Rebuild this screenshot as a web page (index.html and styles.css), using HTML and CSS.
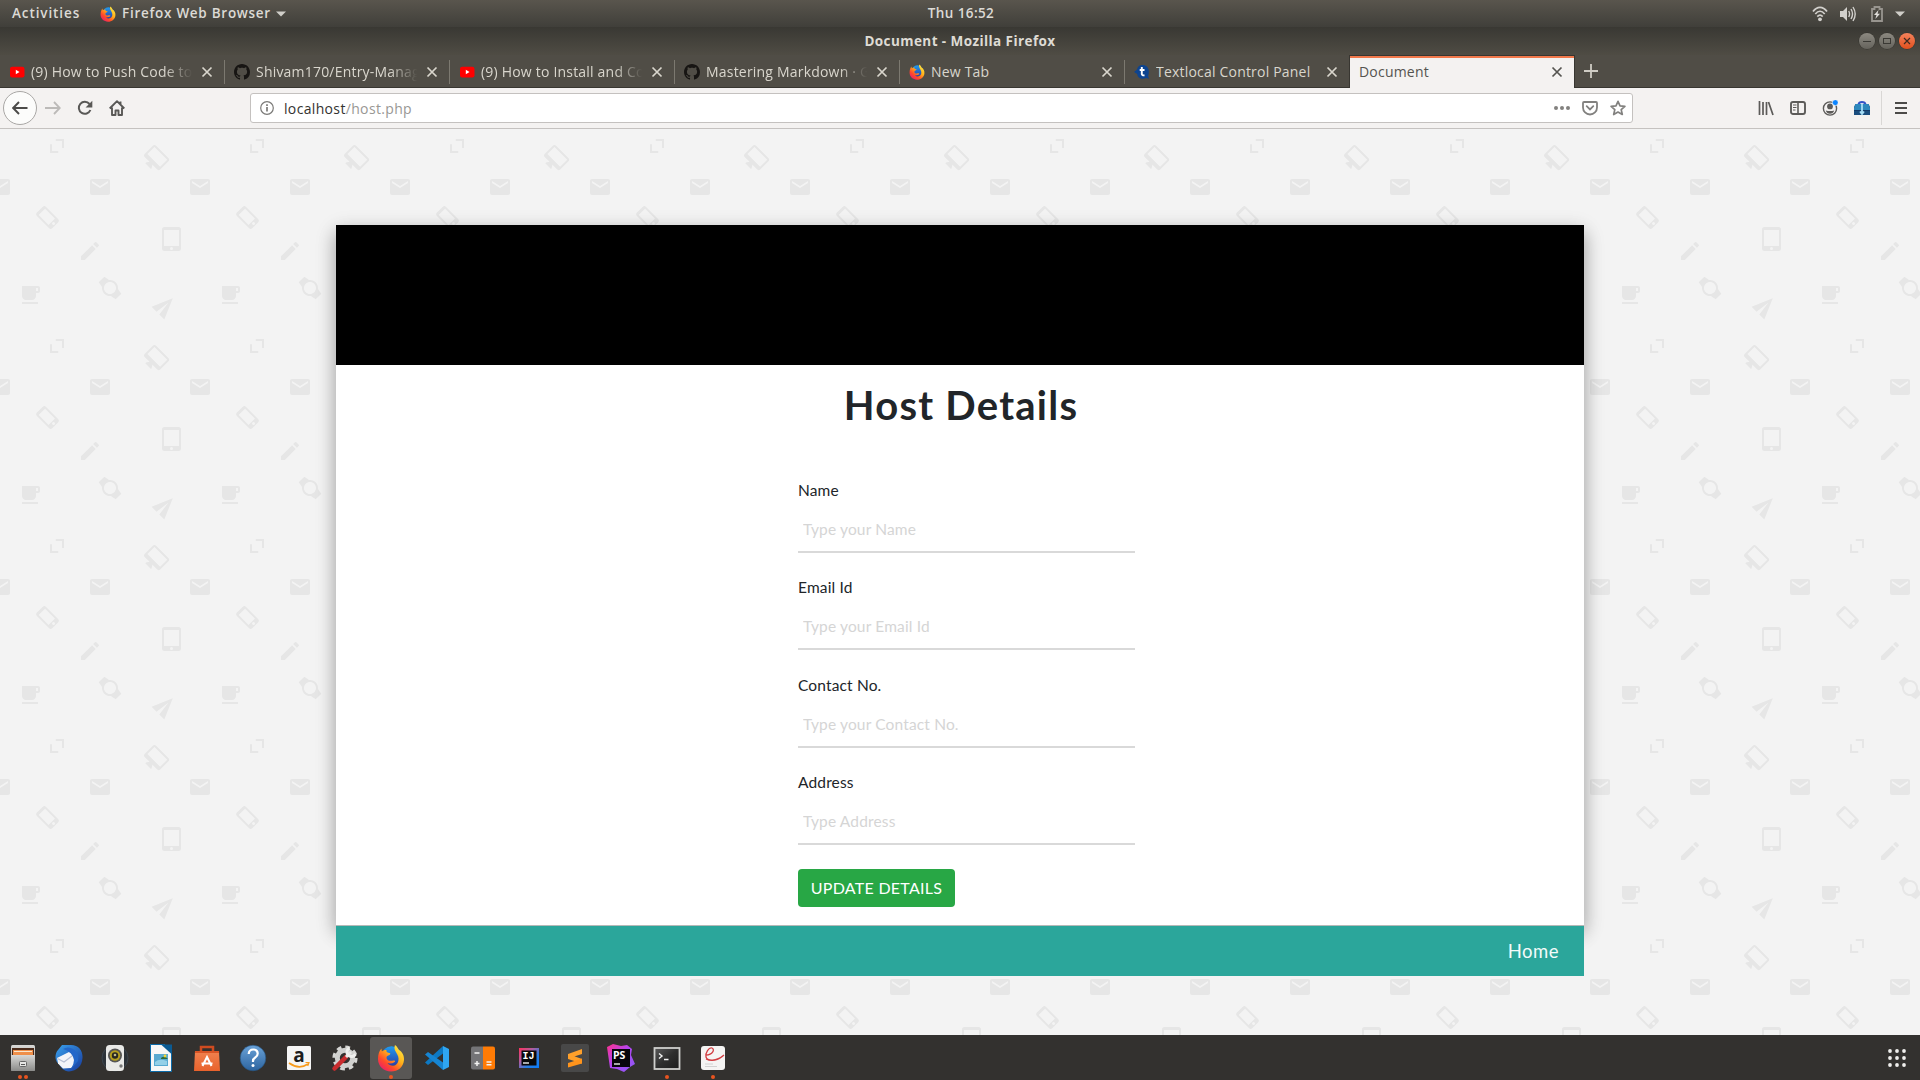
FILE: index.html
```html
<!DOCTYPE html>
<html lang="en">
<head>
<meta charset="utf-8">
<title>Document</title>
<link rel="stylesheet" href="styles.css">
</head>
<body>
<svg class="defs" width="0" height="0" aria-hidden="true">
  <defs>
    <linearGradient id="ffBody" x1="0.9" y1="0" x2="0.1" y2="1">
      <stop offset="0" stop-color="#fff14a"/><stop offset=".4" stop-color="#ffb31a"/><stop offset=".7" stop-color="#ff4a2a"/><stop offset="1" stop-color="#e5127d"/>
    </linearGradient>
    <linearGradient id="ffGlobe" x1="0" y1="0" x2="0" y2="1"><stop offset="0" stop-color="#1f9cf0"/><stop offset="1" stop-color="#2a3fa8"/></linearGradient>
    <linearGradient id="grey" x1="0" y1="0" x2="0" y2="1"><stop offset="0" stop-color="#d8d8d6"/><stop offset="1" stop-color="#8b8b89"/></linearGradient>
    <linearGradient id="tbird" x1="0" y1="0" x2="1" y2="1"><stop offset="0" stop-color="#3aa0ec"/><stop offset="1" stop-color="#173a9c"/></linearGradient>
    <linearGradient id="help" x1="0" y1="0" x2="0" y2="1"><stop offset="0" stop-color="#6aa2d8"/><stop offset="1" stop-color="#2d649f"/></linearGradient>
    <linearGradient id="bag" x1="0" y1="0" x2="0" y2="1"><stop offset="0" stop-color="#f08250"/><stop offset="1" stop-color="#e9622c"/></linearGradient>
    <linearGradient id="ij" x1="0" y1="0" x2="1" y2="1"><stop offset="0" stop-color="#fe315d"/><stop offset=".35" stop-color="#b35c9c"/><stop offset=".65" stop-color="#2a7de1"/><stop offset="1" stop-color="#087cfa"/></linearGradient>
    <linearGradient id="ps" x1="0" y1="0" x2="1" y2="1"><stop offset="0" stop-color="#ff318c"/><stop offset=".45" stop-color="#b345f1"/><stop offset="1" stop-color="#8a5cf5"/></linearGradient>
    <linearGradient id="term" x1="0" y1="0" x2="1" y2="1"><stop offset="0" stop-color="#5a5a5a"/><stop offset=".5" stop-color="#2e2e2e"/><stop offset="1" stop-color="#1c1c1c"/></linearGradient>
    <symbol id="firefox" viewBox="0 0 28 28">
      <circle cx="14.500" cy="12" r="9.800" fill="url(#ffGlobe)"/>
      <path fill="url(#ffBody)" d="M18 1c2.500 1.800 3 3.600 4 5 3.500 2 5.300 6 5 10-.6 7-6 11.500-13 11.500S1 22.400 1 15C1 10.500 2.300 6.500 4.600 4.500c-.2 1.300 0 2 .4 2.900C6 6.400 8 5.800 9.500 6c-.4 1.300 0 2.600 2.800 3 1.200.2 1.400.9.400 1.700l-2.700 1.600c-1 1-.5 3 1 4 2.500 1.200 5-.3 6.500.2 1 .4.700 1.300-.2 1.800-2 1.200-4.300 1.700-6.800.8C13 22.500 18 23 20.500 19c1.600-2.700 1.300-6-.2-8.500C18.500 7 16.500 5 18 1z"/>
    </symbol>
    <symbol id="youtube" viewBox="0 0 16 16"><rect x="1" y="2.700" width="14.500" height="10.800" rx="2.200" fill="#f00"/><path d="M6.800 5.800v4.400L10.500 8z" fill="#fff"/></symbol>
    <symbol id="github" viewBox="0 0 16 16"><path fill="#171513" fill-rule="evenodd" d="M8 0C3.580 0 0 3.580 0 8c0 3.540 2.290 6.530 5.470 7.590.4.070.55-.17.55-.38 0-.19-.01-.82-.01-1.490-2.010.37-2.530-.49-2.690-.94-.09-.23-.48-.94-.82-1.130-.28-.15-.68-.52-.01-.53.63-.01 1.080.58 1.230.82.72 1.210 1.870.87 2.330.66.070-.52.28-.87.51-1.070-1.780-.2-3.640-.89-3.640-3.950 0-.87.31-1.590.82-2.150-.08-.2-.36-1.020.08-2.120 0 0 .67-.21 2.200.82.64-.18 1.320-.27 2-.27s1.360.09 2 .27c1.530-1.040 2.200-.82 2.200-.82.44 1.100.16 1.920.08 2.120.51.56.82 1.270.82 2.150 0 3.070-1.870 3.750-3.650 3.950.29.25.54.73.54 1.480 0 1.070-.01 1.930-.01 2.200 0 .21.15.46.55.38A8.010 8.010 0 0 0 16 8c0-4.420-3.580-8-8-8z"/></symbol>
    <symbol id="close" viewBox="0 0 12 12"><path d="M1.500 1.500l9 9m0-9l-9 9" stroke="currentColor" stroke-width="1.700" fill="none"/></symbol>
    <pattern id="doodles" width="200" height="200" patternUnits="userSpaceOnUse">
      <g fill="#e6e6e6">
        <path d="M55.700 10H64v9h-2v-7h-6.300zM50 15.300h2V22h6.300v2H50z"/>
        <path transform="translate(143.200 18) rotate(45 12 12)" d="M21 2H3c-1.100 0-2 .9-2 2v12c0 1.100.9 2 2 2h7l-2 3v1h8v-1l-2-3h7c1.100 0 2-.9 2-2V4c0-1.100-.9-2-2-2zm0 12H3V4h18v10z"/>
        <path id="mail" transform="translate(88 46)" d="M20 4H4c-1.100 0-2 .9-2 2v12c0 1.100.9 2 2 2h16c1.100 0 2-.9 2-2V6c0-1.100-.9-2-2-2zm0 4l-8 5-8-5V6l8 5 8-5v2z"/>
        <use href="#mail" x="100"/><use href="#mail" x="-100"/>
        <path transform="translate(36 76.500) rotate(-45 11.500 12)" d="M15.500 1h-8A2.500 2.500 0 0 0 5 3.500v17A2.500 2.500 0 0 0 7.500 23h8a2.500 2.500 0 0 0 2.500-2.500v-17A2.500 2.500 0 0 0 15.500 1zm-4 21a1.500 1.500 0 1 1 0-3 1.500 1.500 0 0 1 0 3zm4.500-4H7V4h9v14z"/>
        <path transform="translate(160 98)" d="M18.500 0h-14A2.500 2.500 0 0 0 2 2.500v19A2.500 2.500 0 0 0 4.500 24h14a2.500 2.500 0 0 0 2.500-2.500v-19A2.500 2.500 0 0 0 18.500 0zm-7 23a1.500 1.500 0 1 1 0-3 1.500 1.500 0 0 1 0 3zm7.500-4H4V3h15v16z"/>
        <path transform="translate(78 110)" d="M3 17.250V21h3.750L17.810 9.940l-3.750-3.750L3 17.250zM20.710 7.040a1 1 0 0 0 0-1.410l-2.340-2.340a1 1 0 0 0-1.410 0l-1.830 1.830 3.750 3.750 1.830-1.830z"/>
        <path transform="translate(18 154)" d="M20 3H4v10c0 2.210 1.790 4 4 4h6c2.210 0 4-1.790 4-4v-3h2c1.110 0 2-.9 2-2V5c0-1.110-.89-2-2-2zm0 5h-2V5h2v3zM4 19h16v2H4z"/>
        <path transform="translate(98 147) rotate(-45 12 12)" d="M20 12c0-2.540-1.190-4.810-3.040-6.270L16 0H8l-.95 5.730C5.190 7.190 4 9.450 4 12s1.190 4.810 3.050 6.270L8 24h8l.96-5.730C18.810 16.810 20 14.540 20 12zM6 12c0-3.310 2.690-6 6-6s6 2.690 6 6-2.690 6-6 6-6-2.690-6-6z"/>
        <path transform="translate(153 165) rotate(-45 12 12)" d="M2.010 21L23 12 2.010 3 2 10l15 2-15 2z"/>
      </g>
    </pattern>
  </defs>
</svg>

<header class="panel">
  <div class="panel-left">
    <span class="activities">Activities</span>
    <svg width="16" height="16"><use href="#firefox"/></svg>
    <span class="appname">Firefox Web Browser</span>
    <svg width="10" height="6" viewBox="0 0 10 6"><path d="M0 .5h10L5 5.500z" fill="#d0cec9"/></svg>
  </div>
  <span class="clock">Thu 16:52</span>
  <div class="panel-right">
    <svg width="16" height="16" viewBox="0 0 16 16" fill="none" stroke="#d2d0cc" stroke-width="1.700"><path d="M1 5.600C5-.1 11-.1 15 5.600"/><path d="M3.300 8c3-3.700 6.400-3.700 9.400 0" /><path d="M5.300 10.600c1.800-2 3.600-2 5.400 0"/><circle cx="8" cy="13.300" r="1.900" fill="#d2d0cc" stroke="none"/></svg>
    <svg width="16" height="16" viewBox="0 0 16 16"><path d="M0 5h3l4-4v14l-4-4H0z" fill="#d2d0cc"/><path d="M8.700 5q1.700 3 0 6M11 3q3 5 0 10M13 1q4.400 7 0 14" fill="none" stroke="#d2d0cc" stroke-width="1.400"/></svg>
    <svg width="12" height="16" viewBox="0 0 12 16"><path d="M1 3h2.500V1h5v2H11v12H1z" fill="none" stroke="#98958f" stroke-width="1.800"/><path d="M7.500 4L3 9h2.500L4.300 13 9 7.800H6.500z" fill="#e0deda"/></svg>
    <svg width="10" height="6" viewBox="0 0 10 6"><path d="M0 .5h10L5 5.500z" fill="#d0cec9"/></svg>
  </div>
</header>

<div class="titlebar">
  <span class="win-title">Document - Mozilla Firefox</span>
  <div class="win-buttons">
    <span class="wb"><svg width="16" height="16"><path d="M4 8.500h8" stroke="#3a3934"/></svg></span>
    <span class="wb"><svg width="16" height="16"><rect x="4.500" y="5.500" width="7" height="5" fill="none" stroke="#3a3934"/></svg></span>
    <span class="wb wb-close"><svg width="16" height="16"><path d="M5 5l6 6m0-6l-6 6" stroke="#3f2a20" stroke-width="1.200"/></svg></span>
  </div>
</div>

<nav class="tabs">
  <div class="tab"><svg class="fav" width="16" height="16"><use href="#youtube"/></svg><span class="label fade">(9) How to Push Code to G</span><svg class="x" width="12" height="12"><use href="#close"/></svg></div>
  <div class="tab"><svg class="fav" width="16" height="16"><use href="#github"/></svg><span class="label fade">Shivam170/Entry-Manage</span><svg class="x" width="12" height="12"><use href="#close"/></svg></div>
  <div class="tab"><svg class="fav" width="16" height="16"><use href="#youtube"/></svg><span class="label fade">(9) How to Install and Con</span><svg class="x" width="12" height="12"><use href="#close"/></svg></div>
  <div class="tab"><svg class="fav" width="16" height="16"><use href="#github"/></svg><span class="label fade">Mastering Markdown · Gi</span><svg class="x" width="12" height="12"><use href="#close"/></svg></div>
  <div class="tab"><svg class="fav" width="16" height="16"><use href="#firefox"/></svg><span class="label">New Tab</span><svg class="x" width="12" height="12"><use href="#close"/></svg></div>
  <div class="tab last"><svg class="fav" width="16" height="16" viewBox="0 0 16 16"><path d="M7.500 1c4.600-.4 7.300 2.300 7.300 6.300 0 2 0 3.400-.7 4.500l.9 3-3-.8C8 16 3.500 14 3.200 10L0 8l3-2.500C3.500 3 5 1.500 7.500 1z" fill="#0d4490"/><path d="M7.800 3v7.200q.2 1.500 2.700 1M5.700 6h4.800" fill="none" stroke="#fff" stroke-width="1.900"/></svg><span class="label">Textlocal Control Panel</span><svg class="x" width="12" height="12"><use href="#close"/></svg></div>
  <div class="tab active"><span class="label">Document</span><svg class="x" width="12" height="12"><use href="#close"/></svg></div>
  <svg class="newtab" width="14" height="14"><path d="M7 0v14M0 7h14" stroke="#cfccc4" stroke-width="1.800"/></svg>
</nav>

<div class="toolbar">
  <span class="back"><svg width="16" height="16" viewBox="0 0 16 16"><path d="M15.500 8H1.500M7 2L1.200 8 7 14" fill="none" stroke="#4c4b49" stroke-width="1.900"/></svg></span>
  <div class="navicons">
    <svg width="16" height="16" viewBox="0 0 16 16"><path d="M0 8h14M9 2l5.800 6L9 14" fill="none" stroke="#bcbab8" stroke-width="1.800"/></svg>
    <svg width="16" height="16" viewBox="0 0 16 16"><path d="M13.400 10A6 6 0 1 1 12.500 4" fill="none" stroke="#595856" stroke-width="2"/><path d="M15.300.8v6.700H8.600z" fill="#595856"/></svg>
    <svg width="16" height="16" viewBox="0 0 16 16"><path d="M.7 8.500L8 1.200l7.300 7.300M3 7.500V15h3.500v-4.500h3V15H13V7.500M11.500 4V1.500" fill="none" stroke="#595856" stroke-width="1.900" stroke-linejoin="round"/></svg>
  </div>
  <div class="urlbar">
    <svg width="14" height="14" viewBox="0 0 14 14"><circle cx="7" cy="7" r="6.300" fill="none" stroke="#7b7a78" stroke-width="1.200"/><path d="M7 6v4.500M7 3.200V5" stroke="#7b7a78" stroke-width="1.700"/></svg>
    <span class="url">localhost<span>/host.php</span></span>
    <div class="url-actions">
      <svg width="16" height="16" viewBox="0 0 16 16" fill="#82817f"><circle cx="2" cy="8" r="2"/><circle cx="8" cy="8" r="2"/><circle cx="14" cy="8" r="2"/></svg>
      <svg width="16" height="16" viewBox="0 0 16 16" fill="none" stroke="#82817f" stroke-width="1.800"><path d="M2 2h12q1 0 1 1v4.500a7 7 0 0 1-14 0V3q0-1 1-1z"/><path d="M4.700 6.200L8 9.400l3.300-3.200" stroke-linecap="round"/></svg>
      <svg width="16" height="16" viewBox="0 0 16 16"><path d="M8 1.300l2 4.500 4.900.5-3.700 3.300 1.100 4.900L8 12l-4.300 2.500 1.100-4.900L1.100 6.300 6 5.800z" fill="none" stroke="#82817f" stroke-width="1.700" stroke-linejoin="round"/></svg>
    </div>
  </div>
  <div class="tool-right">
    <svg width="16" height="16" viewBox="0 0 16 16"><path d="M1.500 1v14M5 2v13M8.500 2v13M10.500 2l4.500 13" fill="none" stroke="#5c5b59" stroke-width="1.700"/></svg>
    <svg width="16" height="16" viewBox="0 0 16 16"><rect x="1" y="2" width="14" height="12" rx="2" fill="none" stroke="#5c5b59" stroke-width="1.900"/><path d="M8 2v12" stroke="#5c5b59" stroke-width="1.600"/><path d="M3 5h3.500M3 7.500h3.500M3 10h2.500" stroke="#5c5b59"/></svg>
    <svg width="16" height="16" viewBox="0 0 16 16"><circle cx="8" cy="8.500" r="6.600" fill="none" stroke="#5c5b59" stroke-width="1.400"/><circle cx="8" cy="6.400" r="2.900" fill="#5c5b59"/><path d="M3.800 10.500q4.200 1.200 8.400 0-1 3.300-4.200 3.300t-4.200-3.300z" fill="#5c5b59"/><circle cx="13.300" cy="2.600" r="3" fill="#0a84ff" stroke="#f4f2f1" stroke-width=".8"/></svg>
    <svg width="16" height="16" viewBox="0 0 16 16"><path d="M4.500 4.500Q5 2 8 2t3.500 2.500" fill="none" stroke="#3454c8" stroke-width="2"/><path d="M0 7l1.500-3h13L16 7v8H0z" fill="#1a4d7e"/><path d="M1.500 4h13L16 8v3H0V8z" fill="#2d88bd"/><path d="M0 10.500h16" stroke="#123a68"/><path d="M8 4v9M6 11.500l2 2.500 2-2.500" fill="none" stroke="#a5dcf4" stroke-width="1.800"/></svg>
    <span class="tool-sep"></span>
    <svg width="14" height="14"><path d="M1 2h12M1 7h12M1 12h12" stroke="#4c4b49" stroke-width="1.900"/></svg>
  </div>
</div>

<main class="page">
  <svg class="wallpaper" width="1920" height="906"><rect width="1920" height="906" fill="url(#doodles)"/></svg>
  <section class="card">
    <div class="banner"></div>
    <h1>Host Details</h1>
    <form class="form">
      <div class="field"><label>Name</label><input type="text" placeholder="Type your Name"></div>
      <div class="field"><label>Email Id</label><input type="text" placeholder="Type your Email Id"></div>
      <div class="field"><label>Contact No.</label><input type="text" placeholder="Type your Contact No."></div>
      <div class="field"><label>Address</label><input type="text" placeholder="Type Address"></div>
      <button type="button" class="submit">UPDATE DETAILS</button>
    </form>
  </section>
  <footer class="footer"><a>Home</a></footer>
</main>

<div class="dock">
  <div class="app"><svg width="28" height="28" viewBox="0 0 28 28"><rect x="2" y="1" width="24" height="26" rx="1.500" fill="url(#grey)"/><rect x="3" y="4" width="22" height="7" fill="#4a2a1a"/><path d="M4 6h20v5H4z" fill="#ef8f4a"/><path d="M5 7h18v1H5z" fill="#f7e7cf"/><path d="M2 11h24v15q0 1-1 1H3q-1 0-1-1z" fill="url(#grey)"/><rect x="10.500" y="17.500" width="7" height="5" rx="1" fill="#e6e6e4" stroke="#666"/><path d="M12 20.500h4" stroke="#555"/></svg><i class="dots"><b></b><b></b></i></div>
  <div class="app"><svg width="28" height="28" viewBox="0 0 28 28"><path d="M7 1h9c8 0 12 6 11.500 13C27 22 22 27 14 27.500 9 27 6 24 4 20-1 17 0 9 3 6z" fill="url(#tbird)"/><path d="M2 14L14 8l6 3-1 10-3 3-8 .5-5-5z" fill="#f4f5f9"/><path d="M2.500 14.500L9 18l10-7.500" fill="none" stroke="#b8c0d4" stroke-width="1.200"/><path d="M8 5q5-3 10 0 7 4 5 12l-7 8q3-5 3-9-1-8-11-11z" fill="#2467c9"/></svg></div>
  <div class="app"><svg width="28" height="28" viewBox="0 0 28 28"><circle cx="14" cy="14" r="13" fill="#2c3238" stroke="#3c444c"/><rect x="5" y="1" width="18" height="26" rx="3.500" fill="#e9e9e7"/><circle cx="14" cy="11.500" r="7" fill="#555"/><circle cx="14" cy="11.500" r="5.200" fill="#b59e1d"/><circle cx="14" cy="11.500" r="3.200" fill="#262621"/><circle cx="14" cy="11" r="1.300" fill="#c2bb83"/><circle cx="20" cy="22" r="1.700" fill="#777"/></svg></div>
  <div class="app"><svg width="28" height="28" viewBox="0 0 28 28"><path d="M3.500.5h14l7 8v19h-21z" fill="#f7f7f7" stroke="#0b6aa8"/><path d="M14 .5h11v10z" fill="#0b5a92"/><rect x="7" y="10" width="14" height="12" fill="#58a9d1"/><path d="M8 18q4-4 12-1v4H8z" fill="#94d0e8"/><path d="M14 14q3-3 7 1h-7z" fill="#2f6b3c"/><circle cx="18" cy="12" r="1.400" fill="#f3d432"/></svg></div>
  <div class="app"><svg width="28" height="28" viewBox="0 0 28 28"><path d="M8 9V3h12v6" fill="none" stroke="#cf4b20" stroke-width="2.500"/><path d="M2 7h24l1 20H1z" fill="url(#bag)"/><path d="M2 7h24v2H2z" fill="#d95425"/><path d="M9.500 22L14 13l4.500 9M8.500 19.500h11" fill="none" stroke="#fff" stroke-width="2"/></svg></div>
  <div class="app"><svg width="28" height="28" viewBox="0 0 28 28"><circle cx="14" cy="14" r="12.800" fill="url(#help)" stroke="#255482" stroke-width=".6"/><path d="M9.700 10q.3-4.500 4.600-4.500 4.400 0 4.400 4 0 2.500-2.500 4t-2.200 4.500" fill="none" stroke="#fff" stroke-width="2.200"/><circle cx="14" cy="21.500" r="1.500" fill="#fff"/></svg></div>
  <div class="app"><svg width="28" height="28" viewBox="0 0 28 28"><rect x="2" y="2" width="24" height="24" rx="1.500" fill="#f5f5f5"/><text x="14" y="18" text-anchor="middle" class="amazon">a</text><path d="M4 19q10 7 19 1" fill="none" stroke="#f79a1c" stroke-width="1.700"/><path d="M20.500 18.500h3.500l-1.300 3.500" fill="none" stroke="#f79a1c" stroke-width="1.200"/></svg></div>
  <div class="app"><svg width="28" height="28" viewBox="0 0 28 28"><circle cx="14" cy="14" r="10.600" fill="none" stroke="#d6d6d4" stroke-width="4" stroke-dasharray="4.500 3.820"/><circle cx="14" cy="14" r="7.700" fill="none" stroke="#d0d0ce" stroke-width="5"/><path d="M3.500 24.500L15 13" stroke="#c92c2e" stroke-width="4.500" stroke-linecap="round"/><path d="M15 13l5-5" stroke="#e7e7e5" stroke-width="3"/><path d="M18.500 4a4.500 4.500 0 1 0 6 6" fill="none" stroke="#efefed" stroke-width="3"/></svg></div>
  <div class="app current"><svg width="28" height="28"><use href="#firefox"/></svg><i class="dots"><b></b></i></div>
  <div class="app"><svg width="28" height="28" viewBox="0 0 28 28"><path d="M20 2v7.500L5 21l-3-2.500z" fill="#0d79c4"/><path d="M20 26v-7.500L5 8 2 10.500z" fill="#1685d3"/><path d="M20 2l6 3v18l-6 3z" fill="#2fa6f2"/></svg></div>
  <div class="app"><svg width="28" height="28" viewBox="0 0 28 28"><path d="M4 2.500h10v23H4q-2 0-2-2v-19q0-2 2-2z" fill="#747477"/><path d="M14 2.500h10q2 0 2 2v19q0 2-2 2H14z" fill="#ff7b05"/><path d="M5.500 9h5M5.500 19.500h5M8 17v5M17.500 18h5M17.500 20.700h5" stroke="#f2f2f2" stroke-width="1.500"/></svg></div>
  <div class="app"><svg width="28" height="28" viewBox="0 0 28 28"><path d="M4 4h20v20H4z" fill="url(#ij)"/><path d="M6.500 6.500h15v15h-15z" fill="#090909"/><text x="7.500" y="15" class="ide">IJ</text><path d="M8 19h6" stroke="#fff" stroke-width="1.300"/></svg></div>
  <div class="app"><svg width="28" height="28" viewBox="0 0 28 28"><rect width="28" height="28" rx="2" fill="#484848"/><path d="M21 5v5L7 14.500V10zM7 10l14 5v4.500L7 15z" fill="#ffa02a"/><path d="M21 14.500v5L7 23.500V19z" fill="#ff941c"/></svg></div>
  <div class="app"><svg width="28" height="28" viewBox="0 0 28 28"><path d="M0 3L6 0l8 2 6-1 5 4-1 6 4 9-5 3-6 5-7-3-7-1z" fill="url(#ps)"/><path d="M5 5h18v18H5z" fill="#08060b"/><text x="6" y="15" class="ide psx">PS</text><path d="M7 20h6" stroke="#fff" stroke-width="1.300"/></svg></div>
  <div class="app"><svg width="28" height="28" viewBox="0 0 28 28"><rect x="1.500" y="4" width="25" height="21" fill="url(#term)" stroke="#cfcfcd" stroke-width="1.800"/><path d="M6 9.500l3 2.500-3 2.500M11 15.500h4.500" fill="none" stroke="#f2f2f2" stroke-width="1.400"/></svg><i class="dots"><b></b></i></div>
  <div class="app"><svg width="28" height="28" viewBox="0 0 28 28"><rect x="2" y="2" width="24" height="24" rx="3" fill="#f5f4f3"/><path d="M7 11c7 0 9-6 6-7S6 9 7 13s10 5 18-2M7 15q8 4 17-3" fill="none" stroke="#d23c40" stroke-width="1.300"/><path d="M6 20h8M6 22.500h12" stroke="#d2d2d2"/></svg><i class="dots"><b></b></i></div>
  <svg class="grid" width="18" height="18" viewBox="0 0 18 18" fill="#f0efed"><circle cx="2" cy="2" r="1.900"/><circle cx="9" cy="2" r="1.900"/><circle cx="16" cy="2" r="1.900"/><circle cx="2" cy="9" r="1.900"/><circle cx="9" cy="9" r="1.900"/><circle cx="16" cy="9" r="1.900"/><circle cx="2" cy="16" r="1.900"/><circle cx="9" cy="16" r="1.900"/><circle cx="16" cy="16" r="1.900"/></svg>
</div>
</body>
</html>
```

FILE: styles.css
```css
* { box-sizing: border-box; }
body {
  margin: 0;
  width: 1920px;
  height: 1080px;
  overflow: hidden;
  display: flex;
  flex-direction: column;
  font-family: "Open Sans", "Noto Sans", sans-serif;
  font-size: 14px;
}
svg { display: block; flex: none; }
.defs { position: absolute; }

.panel {
  height: 27px;
  display: grid;
  grid-template-columns: 1fr auto 1fr;
  align-items: center;
  background: linear-gradient(#59554d, #403f3a);
  color: #dcdad5;
  font-size: 13.5px;
  font-weight: 600;
  line-height: 27px;
}
.panel-left { display: flex; align-items: center; padding-left: 12px; }
.activities { width: 88px; letter-spacing: .9px; }
.appname { margin: 0 5px 0 6px; letter-spacing: .72px; }
.clock { padding-left: 2px; letter-spacing: .4px; }
.panel-right { display: flex; align-items: center; justify-content: flex-end; padding-right: 15px; }
.panel-right svg { margin-left: 12px; }
.panel-right svg:nth-child(3) { margin-left: 15px; }
.panel-right svg:nth-child(4) { margin-left: 12px; }

.titlebar {
  height: 28px;
  display: grid;
  grid-template-columns: 1fr auto 1fr;
  align-items: center;
  background: linear-gradient(#393833, #4f4c44);
  color: #dedbd4;
  font-size: 13.5px;
  font-weight: 700;
}
.win-title { grid-column: 2; line-height: 26px; letter-spacing: .42px; }
.win-buttons { display: flex; justify-content: flex-end; gap: 4px; padding-right: 5px; }
.wb { width: 16px; height: 16px; border-radius: 50%; background: linear-gradient(#8c8981, #65635c); box-shadow: 0 0 0 .5px #33322e; }
.wb-close { background: linear-gradient(#f4825c, #e2501d); }

.tabs {
  height: 33px;
  display: flex;
  background: #504d46;
  border-bottom: 1px solid #383631;
  color: #d9d6cd;
  letter-spacing: .2px;
}
.tab {
  position: relative;
  width: 225px;
  height: 32px;
  display: flex;
  align-items: center;
  padding: 1px 12px 0 9px;
}
.tab::after {
  content: "";
  position: absolute;
  right: 0;
  top: 5px;
  width: 1px;
  height: 24px;
  background: #7c7970;
}
.tab.last { width: 224px; padding-right: 11px; }
.tab.last::after, .tab.active::after { display: none; }
.label { flex: 1; min-width: 0; margin: 0 7px 0 6px; line-height: 20px; white-space: nowrap; overflow: hidden; }
.fade { -webkit-mask-image: linear-gradient(90deg, #000 82%, transparent 99%); mask-image: linear-gradient(90deg, #000 82%, transparent 99%); }
.tab.active {
  height: 33px;
  width: 226px;
  padding: 0 11px 1px 3px;
  background: #f4f2f1;
  border: 1px solid #383631;
  border-bottom: 0;
  box-shadow: inset 0 2px #f2784b;
  color: #555450;
}
.newtab { margin: 9px 0 0 9px; }

.toolbar {
  height: 41px;
  display: flex;
  align-items: center;
  background: #f4f2f1;
  border-bottom: 1px solid #c5c2c0;
}
.back {
  width: 34px;
  height: 34px;
  margin-left: 3px;
  display: grid;
  place-items: center;
  border: 1px solid #a9a7a5;
  border-radius: 50%;
  background: #fcfcfb;
}
.navicons { display: flex; gap: 16px; margin-left: 8px; }
.urlbar {
  width: 1383px;
  height: 30px;
  margin-left: 125px;
  display: flex;
  align-items: center;
  padding: 0 6px 0 9px;
  background: #fff;
  border: 1px solid #c4c1bf;
  border-radius: 3px;
}
.url { flex: 1; margin-left: 10px; color: #33322f; letter-spacing: .34px; }
.url span { color: #999794; }
.url-actions { display: flex; gap: 12px; }
.tool-right { flex: 1; display: flex; align-items: center; gap: 16px; padding-left: 125px; }
.tool-sep { width: 1px; height: 34px; margin: 0 -4px 0 -5px; background: #d9d7d5; }

.page {
  position: relative;
  height: 906px;
  padding-top: 96px;
  display: flex;
  flex-direction: column;
  align-items: center;
  background: #f3f3f3;
  font-family: Lato, "Open Sans", sans-serif;
}
.wallpaper { position: absolute; left: 0; top: 0; }
.card {
  position: relative;
  width: 1248px;
  height: 701px;
  display: flex;
  flex-direction: column;
  background: #fff;
  border-bottom: 1px solid #b5b9b8;
  box-shadow: 0 8px 17px 0 rgba(0, 0, 0, .2), 0 6px 20px 0 rgba(0, 0, 0, .19);
}
.banner { height: 140px; background: #000; }
.card h1 {
  margin: 16px 0 0;
  height: 48px;
  padding-left: 2px;
  line-height: 48px;
  text-align: center;
  font-size: 40px;
  font-weight: 700;
  letter-spacing: 1.250px;
  color: #212529;
}
.form { width: 337px; margin: 50.700px 0 0 462px; display: flex; flex-direction: column; align-items: flex-start; }
.field { width: 337px; height: 97.500px; }
.field label { display: block; height: 23px; line-height: 21px; font-size: 15.500px; letter-spacing: .15px; color: #212529; }
.field input {
  display: block;
  width: 337px;
  height: 50px;
  padding: 4px 5px 0;
  border: 0;
  border-bottom: 2px solid #d9d9d9;
  background: transparent;
  font: 15.500px Lato, sans-serif;
  letter-spacing: .15px;
}
.field input::placeholder { color: #d5d5d5; opacity: 1; }
.submit {
  width: 157px;
  height: 38px;
  margin: -.7px 0 0;
  padding: 0 0 2px;
  border: 0;
  border-radius: 4px;
  background: #28a745;
  color: #fff;
  font: 16px Lato, sans-serif;
  letter-spacing: .26px;
}
.footer {
  position: relative;
  width: 1248px;
  height: 50px;
  display: flex;
  align-items: center;
  justify-content: flex-end;
  padding-right: 25px;
  background: #2ba69b;
  color: #f4fbfa;
  font-size: 18.500px;
  letter-spacing: .5px;
}

.dock { height: 45px; display: flex; background: #33312f; }
.app { position: relative; width: 46px; height: 45px; display: flex; justify-content: center; padding-top: 9px; }
.app.current::before {
  content: "";
  position: absolute;
  left: 2px;
  top: 2px;
  width: 42px;
  height: 42px;
  border-radius: 3px;
  background: #595755;
}
.app svg { position: relative; }
.dots { position: absolute; left: 0; right: 0; top: 40px; display: flex; justify-content: center; gap: 2px; }
.dots b { width: 4px; height: 4px; border-radius: 50%; background: #e95420; }
.amazon { font: 700 19px "Open Sans", sans-serif; fill: #1d1d1d; }
.ide { font: 700 10px "Liberation Mono", monospace; fill: #fff; }
.psx { font: 700 10.500px "Open Sans", sans-serif; }
.grid { margin: 14px 14px 0 auto; }
```
